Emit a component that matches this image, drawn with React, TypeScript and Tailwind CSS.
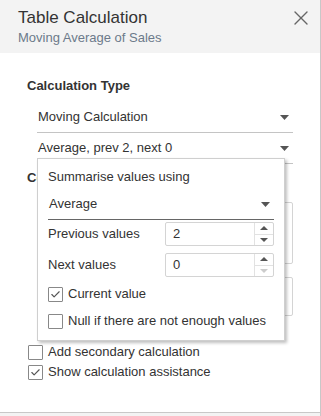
import { Check, X } from 'lucide-react';

function Caret({ className = '' }: { className?: string }) {
  return (
    <svg width="9" height="5" viewBox="0 0 9 5" className={className}>
      <path d="M0 0h9L4.5 5z" fill="#555" />
    </svg>
  );
}

function Dropdown({ label, dark }: { label: string; dark?: boolean }) {
  return (
    <div
      className={`flex items-center justify-between border-b h-[31px] pl-[1px] pr-[4px] ${dark ? 'border-[#666]' : 'border-[#c4c4c4]'}`}
    >
      <span className="text-[13px] text-[#333]">{label}</span>
      <Caret />
    </div>
  );
}

function Box({ checked }: { checked?: boolean }) {
  return (
    <span className="w-[15px] h-[15px] border border-[#888] rounded-[1px] bg-white flex items-center justify-center shrink-0">
      {checked && <Check className="w-[11px] h-[11px] text-[#555]" strokeWidth={2.5} />}
    </span>
  );
}

function Spinner({ value, canDown }: { value: string; canDown: boolean }) {
  return (
    <div className="w-[109px] h-[24px] border border-[#d4d4d4] rounded-[2px] flex">
      <span className="flex-1 pl-[7px] text-[13px] text-[#333] leading-[22px]">{value}</span>
      <div className="w-[19px] border-l border-[#e2e2e2] flex flex-col">
        <span className="flex-1 flex items-center justify-center border-b border-[#e2e2e2]">
          <svg width="8" height="4" viewBox="0 0 8 4"><path d="M0 4h8L4 0z" fill="#555" /></svg>
        </span>
        <span className="flex-1 flex items-center justify-center">
          <svg width="8" height="4" viewBox="0 0 8 4"><path d="M0 0h8L4 4z" fill={canDown ? '#555' : '#ccc'} /></svg>
        </span>
      </div>
    </div>
  );
}

export default function App() {
  return (
    <div
      className="w-[321px] h-[416px] relative overflow-hidden bg-white border-r border-[#c8c8c8] flex flex-col"
      style={{ fontFamily: '"Liberation Sans", Arial, sans-serif' }}
    >
      <div className="h-[53px] bg-[#f3f3f3] flex justify-between pl-[18px] pr-[7px] pt-[7px] shrink-0">
        <div>
          <div className="text-[17px] text-[#333] leading-[22px]">Table Calculation</div>
          <div className="text-[13px] text-[#6c7a8a] leading-[18px]">Moving Average of Sales</div>
        </div>
        <X className="w-[24px] h-[24px] text-[#666] -mt-[1px]" strokeWidth={1.4} />
      </div>

      <div className="flex-1 pl-[27px] pr-[27px] pt-[25px]">
        <div className="text-[13px] font-bold text-[#333] leading-[16px]">Calculation Type</div>
        <div className="ml-[10px] mt-[8px]">
          <Dropdown label="Moving Calculation" />
          <Dropdown label="Average, prev 2, next 0" />
        </div>

        <div className="text-[13px] font-bold text-[#333] leading-[16px] mt-[6px]">Compute Using</div>
        <div className="ml-[10px] mt-[16px] h-[62px] border border-[#d4d4d4] rounded-[2px]" />
        <div className="ml-[10px] mt-[13px] h-[39px] border border-[#d4d4d4] rounded-[2px]" />

        <label className="flex items-center gap-[5px] mt-[26px] ml-[1px] h-[20px]">
          <Box />
          <span className="text-[13px] text-[#333]">Add secondary calculation</span>
        </label>
        <label className="flex items-center gap-[5px] ml-[1px] h-[20px]">
          <Box checked />
          <span className="text-[13px] text-[#333]">Show calculation assistance</span>
        </label>
      </div>

      <div className="h-[4px] border-t border-[#c8c8c8] bg-[#f3f3f3] shrink-0" />

      <div className="absolute left-[37px] top-[158px] w-[248px] h-[183px] bg-white border border-[#cfcfcf] shadow-[2px_2px_3px_rgba(0,0,0,0.25)] pl-[10px] pr-[10px] pt-[9px]">
        <div className="text-[13px] text-[#333] leading-[18px]">Summarise values using</div>
        <div className="mt-[3px]">
          <Dropdown label="Average" dark />
        </div>
        <div className="flex items-center justify-between mt-[2px]">
          <span className="text-[13px] text-[#333]">Previous values</span>
          <Spinner value="2" canDown />
        </div>
        <div className="flex items-center justify-between mt-[7px]">
          <span className="text-[13px] text-[#333]">Next values</span>
          <Spinner value="0" canDown={false} />
        </div>
        <label className="flex items-center gap-[5px] mt-[6px] h-[22px]">
          <Box checked />
          <span className="text-[13px] text-[#333]">Current value</span>
        </label>
        <label className="flex items-center gap-[5px] mt-[5px] h-[22px]">
          <Box />
          <span className="text-[13px] text-[#333]">Null if there are not enough values</span>
        </label>
      </div>
    </div>
  );
}
